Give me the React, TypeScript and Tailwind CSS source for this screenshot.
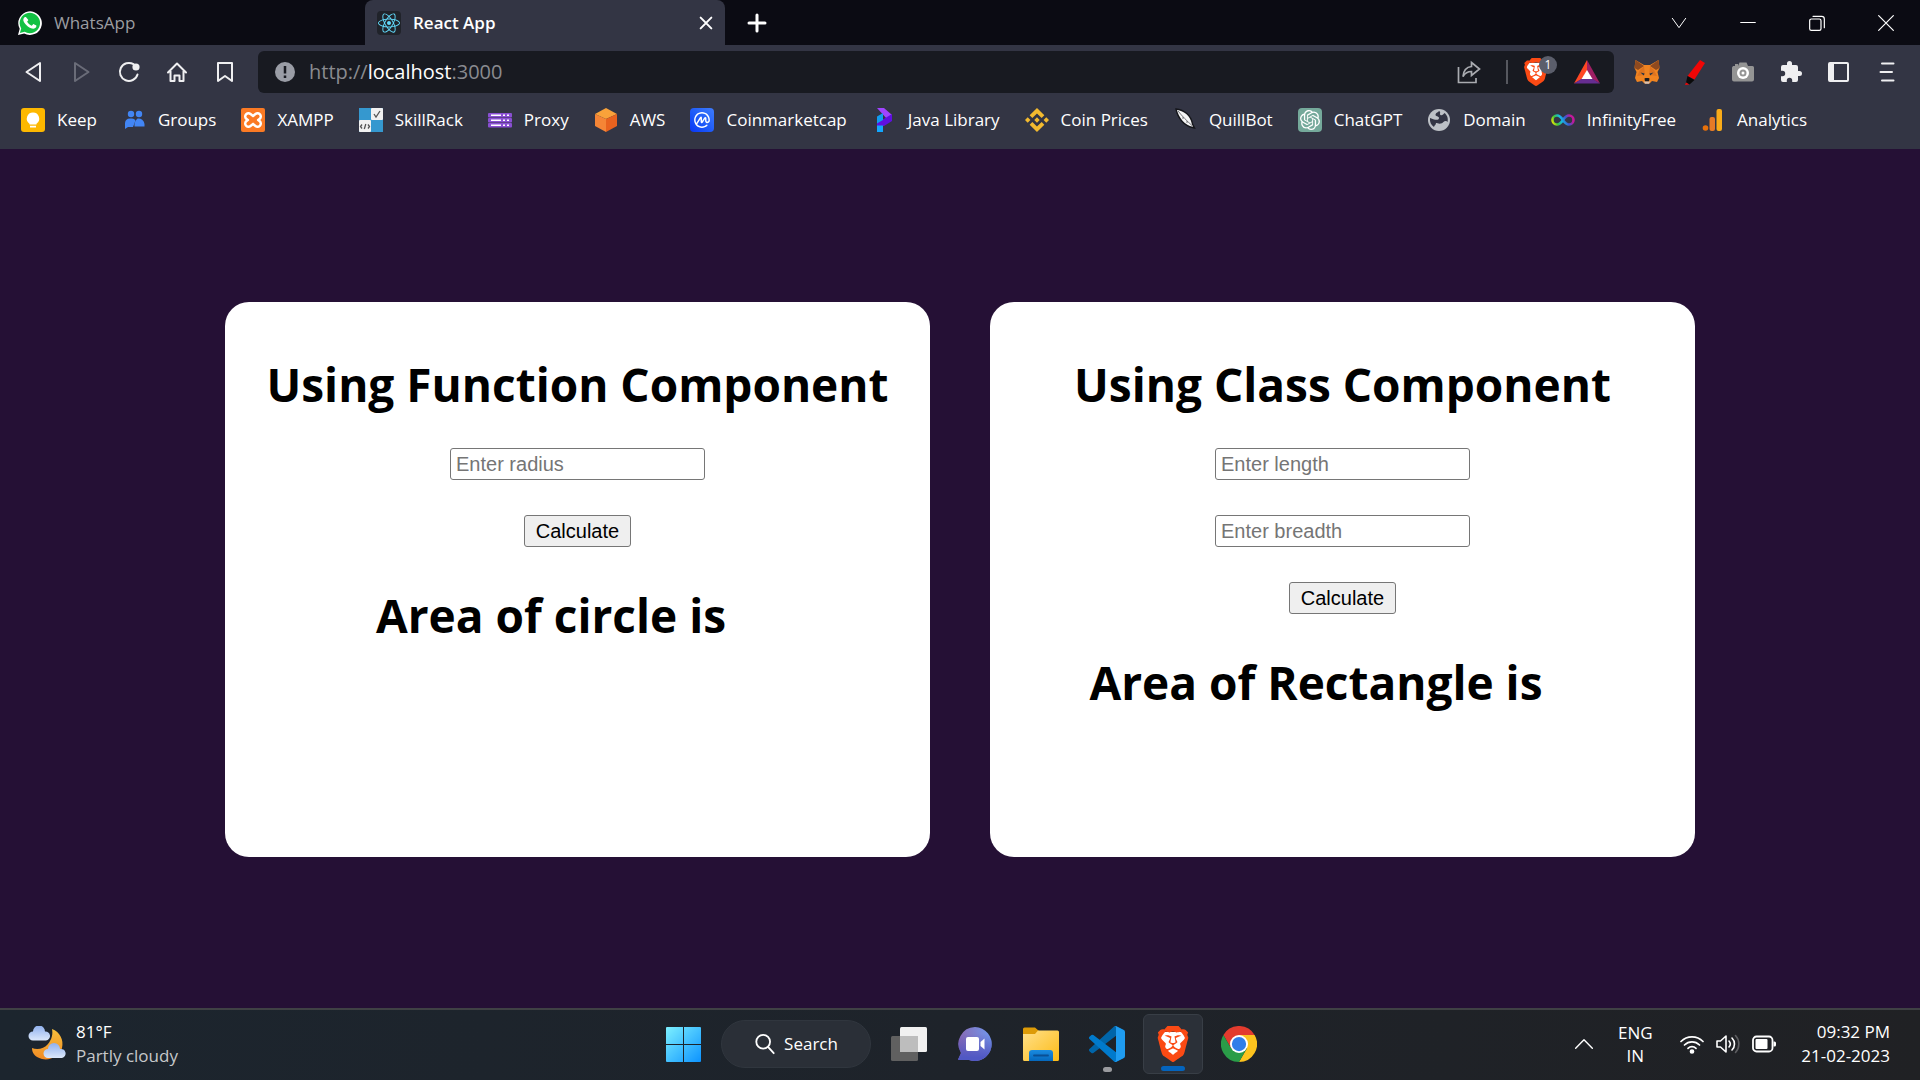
import type { ReactNode } from "react";
import { FaReact } from "react-icons/fa";
import { SiBinance, SiBrave, SiCoinmarketcap, SiOpenai } from "react-icons/si";

/* ---------- Tab strip and toolbar icons ---------- */

const WhatsAppIcon = () => (
  <svg viewBox="0 0 24 24" className="size-6 shrink-0">
    <path d="M0 24 1.7 17.8A11.8 11.8 0 1 1 6.2 22.400Z" fill="#fff" />
    <path d="M1.900 22.100 3.200 17.400A10.200 10.200 0 1 1 6.700 20.800Z" fill="#12c143" />
    <path d="M8.300 6.400c-.3-.5-.5-.5-.9-.5-.4 0-.9.2-1.200.7-.6.7-1 1.500-.9 2.500.1 1.300 1 2.600 2 3.900 1.500 1.800 3.400 3.500 5.700 4.200 1.500.6 2.900.8 4.200-.1.8-.5 1.200-1.300 1.200-2.200 0-.3-.1-.4-.4-.6l-2.300-1.100c-.4-.2-.6-.1-.8.2l-.9 1.100c-.2.300-.5.3-.8.1-1.700-.8-3-1.900-3.900-3.500-.2-.3-.1-.5.100-.8l.7-.9c.2-.2.2-.4.1-.7Z" fill="#fff" />
  </svg>
);

const ReactTabIcon = () => (
  <span className="flex size-6 shrink-0 items-center justify-center rounded-sm bg-[#20232a]">
    <FaReact className="size-[22px] text-[#61dafb]" />
  </span>
);

const Stroke = ({ children, className = "size-6" }: { children: ReactNode; className?: string }) => (
  <svg viewBox="0 0 24 24" fill="none" stroke="currentColor" strokeWidth="2" strokeLinecap="round" strokeLinejoin="round" className={className}>
    {children}
  </svg>
);

const BackIcon = () => <Stroke><path d="M19 3v18L5.500 12Z" /></Stroke>;
const ForwardIcon = () => <Stroke><path d="M6 3v18L19.500 12Z" /></Stroke>;
const ReloadIcon = () => (
  <Stroke>
    <path d="M20.500 14.500A9 9 0 1 1 16.500 4.200" />
    <circle cx="19" cy="7" r="2.600" fill="currentColor" />
  </Stroke>
);
const HomeIcon = () => (
  <Stroke>
    <path d="M3 12.500 12 3.500 21 12.500M5.500 11V21H9.500v-5.500h5V21h4V11" />
  </Stroke>
);
const BookmarkIcon = () => <Stroke><path d="M5 3h14v18l-7-5-7 5Z" /></Stroke>;

const InfoIcon = () => (
  <svg viewBox="0 0 20 20" className="size-5 shrink-0">
    <circle cx="10" cy="10" r="10" fill="#9a9da6" />
    <path d="M10 4v7.500M10 13.500v2.500" stroke="#181a21" strokeWidth="2.500" />
  </svg>
);

const ShareIcon = () => (
  <svg viewBox="0 0 24 24" fill="none" stroke="#a9abb0" strokeWidth="1.700" className="size-6">
    <path d="M1.500 7v15.500h17.500V18M14.500 2.500 22.500 9l-8 6.500v-4c-4 0-6.500 1.500-8.500 5C6.500 10.500 9.500 7 14.500 6.500Z" />
  </svg>
);

const BraveLion = ({ className }: { className: string }) => (
  <span className={`relative inline-flex ${className}`}>
    <svg viewBox="0 0 24 24" className="absolute inset-0 size-full">
      <path d="M5 4h14l1.500 5-3 10L12 22.500 6.500 19l-3-10Z" fill="#fff" />
    </svg>
    <SiBrave className="relative size-full text-[#fb4a14]" />
  </span>
);

const BatIcon = () => (
  <svg viewBox="0 0 26 24" className="h-6 w-[26px]">
    <path d="M13 0 0 23.500l8-4.500 5-8Z" fill="#ff4724" />
    <path d="M13 0 26 23.500 18 19l-5-8Z" fill="#9e1f63" />
    <path d="M0 23.500h26L18 18.500H8Z" fill="#662d91" />
    <path d="m13 10-5.500 9h11Z" fill="#fff" />
  </svg>
);

const FoxIcon = () => (
  <svg viewBox="0 0 26 24" className="h-6 w-[26px]">
    <path d="m1.500 0 8.500 5h6l8.500-5 1 8-2 4 1.500 6-2 4-5-1-2.500 2.500h-5L8 21l-5 1-2-4 1.500-6-2-4Z" fill="#f08421" />
    <path d="m1.500 0 8.500 6-6 4-3.500-2ZM24.500 0 16 6l6 4 3.500-2Z" fill="#8f4a1f" />
    <path d="m6 10 4-3.500L11 15l-8 1ZM20 10l-4-3.500L15 15l8 1Z" fill="#dd7320" />
    <path d="m6.500 12.500 4 1-.8 2ZM19.500 12.500l-4 1 .8 2Z" fill="#233447" />
    <path d="m10.500 18.500.5 3h4l.5-3-1-.5h-3Z" fill="#1b1b1f" />
    <path d="M10 21.500h6l-1 2.200h-4Z" fill="#d7c1b3" />
  </svg>
);

const MarkerIcon = () => (
  <svg viewBox="0 0 24 30" className="h-[30px] w-6">
    <path d="m17 3 5 3L11.500 22.500l-7-3.500Z" fill="#f00606" />
    <path d="m4.500 19 7 4-5 4.500-3.500-2Z" fill="#0a0a0a" />
    <path d="m3 25.500 3.500 2-4.500.5Z" fill="#f00606" />
  </svg>
);

const CameraIcon = () => (
  <svg viewBox="0 0 24 24" className="size-6">
    <path d="M2 6h2V4h3v2l1.500-3.500h7L17 6h4.500A1.500 1.500 0 0 1 23 7.500v12a2 2 0 0 1-2 2H3a2 2 0 0 1-2-2v-12Z" fill="#949494" />
    <circle cx="12" cy="13" r="6" fill="#fff" />
    <circle cx="12" cy="13" r="3.500" fill="#949494" />
    <circle cx="12" cy="13" r="1.500" fill="#fff" />
  </svg>
);

const PuzzleIcon = () => (
  <svg viewBox="0 0 24 24" fill="currentColor" className="size-6">
    <path d="M20.500 11H19V7a2 2 0 0 0-2-2h-4V3.500a2.500 2.500 0 0 0-5 0V5H4a2 2 0 0 0-2 2v3.800h1.500a2.700 2.700 0 0 1 0 5.400H2V20a2 2 0 0 0 2 2h3.800v-1.500a2.700 2.700 0 0 1 5.400 0V22H17a2 2 0 0 0 2-2v-4h1.500a2.500 2.500 0 0 0 0-5Z" />
  </svg>
);

const SidebarIcon = () => (
  <svg viewBox="0 0 22 20" className="h-5 w-[22px]">
    <rect x="1" y="1" width="19" height="18" rx="1" fill="none" stroke="currentColor" strokeWidth="2" />
    <rect x="1" y="1" width="5" height="18" fill="currentColor" />
  </svg>
);

const MenuIcon = () => (
  <svg viewBox="0 0 16 20" className="h-5 w-4" stroke="currentColor" strokeWidth="2" strokeLinecap="round">
    <path d="M3 1.500h11.500M1.500 10h11.500M3 18.500h11.500" />
  </svg>
);

/* ---------- Bookmark icons ---------- */

const KeepIcon = () => (
  <svg viewBox="0 0 24 24" className="size-6">
    <rect width="24" height="24" rx="3" fill="#fdb800" />
    <path d="M12 4.500a6.200 6.200 0 0 0-3.500 11.300V16.500h7v-.7A6.200 6.200 0 0 0 12 4.500ZM9 17.800h6v1.700H9Z" fill="#fff" />
  </svg>
);

const GroupsIcon = () => (
  <svg viewBox="0 0 24 24" className="size-6" fill="#4285f4">
    <circle cx="9" cy="6" r="3.200" />
    <circle cx="17" cy="6" r="3.200" />
    <path d="M3 21v-6a5 5 0 0 1 5-4.500h2a4 4 0 0 1 3.500 2L11 19H6Z" />
    <path d="M12.500 18.500a9 9 0 0 1 3-8 6 6 0 0 1 7 5.500v2.500Z" />
  </svg>
);

const XamppIcon = () => (
  <svg viewBox="0 0 24 24" className="size-6" strokeLinecap="round" fill="none">
    <rect width="24" height="24" rx="2" fill="#fb7a24" />
    <path d="m7.500 8.500 9 7M16.500 8.500l-9 7" stroke="#fff" strokeWidth="9" />
    <path d="m7.500 8.500 9 7M16.500 8.500l-9 7" stroke="#fb7a24" strokeWidth="4" />
    <path d="M9 12h6" stroke="#fb7a24" strokeWidth="2" />
  </svg>
);

const SkillRackIcon = () => (
  <svg viewBox="0 0 24 24" className="size-6">
    <rect width="24" height="24" fill="#3598cf" />
    <rect x="12" width="12" height="12" rx="1" fill="#f1f1f1" />
    <rect y="12" width="12" height="12" rx="1" fill="#f1f1f1" />
    <path d="m15 6 2 3 4-6M3 16.500 1.500 18.500 3 20.500M9 16.500l1.500 2L9 20.500M6.800 16l-1.500 5" fill="none" stroke="#555" strokeWidth="1.300" />
  </svg>
);

const ProxyIcon = () => (
  <svg viewBox="0 0 24 24" className="size-6">
    {[5, 10, 15].map((y) => (
      <g key={y}>
        <rect y={y} width="24" height="4.500" rx="1" fill="#8a4fd3" />
        <path d={`M3 ${y + 2.2}h10M15 ${y + 2.2}h2M19 ${y + 2.2}h2`} stroke="#fff" strokeWidth="1.400" />
      </g>
    ))}
  </svg>
);

const AwsIcon = () => (
  <svg viewBox="0 0 24 24" className="size-6">
    <path d="M12 0 23 6 12 11 1 6Z" fill="#f9a23a" />
    <path d="M1 6 12 11v13L1 18Z" fill="#f58536" />
    <path d="M23 6 12 11v13l11-6Z" fill="#e8621f" />
  </svg>
);

const CoinmarketcapIcon = () => (
  <span className="flex size-6 items-center justify-center rounded bg-linear-to-tr from-[#0b33f5] to-[#3f7cfb]">
    <SiCoinmarketcap className="size-4 text-white" />
  </span>
);

const JavaLibraryIcon = () => (
  <svg viewBox="0 0 24 24" className="size-6">
    <path d="M5 0h7l8 7-5 4Z" fill="#a044ff" />
    <path d="M20 6v7l-8 5H5v-3Z" fill="#5f0fe0" />
    <path d="M5 8.500 11 5v7l-6 3.500Z" fill="#109cf1" />
    <path d="M5 17.500h6V24H5Z" fill="#12a6ff" />
  </svg>
);

const QuillIcon = () => (
  <svg viewBox="0 0 24 24" className="size-6">
    <path d="M3 1c8 1 15 6 16.500 15l2 4-2-.5C12 18 5 11 3 1Z" fill="#f5f5f5" stroke="#15161b" strokeWidth="1.400" />
    <path d="M5 3c4 5 9 10 14.500 15M9 10l2 0M13 14h2" stroke="#55565b" strokeWidth=".8" fill="none" />
  </svg>
);

const ChatGptIcon = () => (
  <span className="flex size-6 items-center justify-center rounded bg-[#75a99b]">
    <SiOpenai className="size-5 text-white" />
  </span>
);

const GlobeIcon = () => (
  <svg viewBox="0 0 24 24" className="size-6">
    <circle cx="12" cy="12" r="11" fill="#bdc1c6" />
    <path d="M12 3c-1 1.500-3 1.500-3.500 3.500S12 8 12 10s-2.500 2-5 1.500L3 10c-.5 4 1 7 4 9 .5-2 2-2 2-4 1 0 3 1 5 .5s3-2.500 4.500-2.500c1 0 1.500.5 2 1 1-4-.5-7-3-9-1 1-2.500 3-4 2s1-3-1.500-4Z" fill="#333544" />
  </svg>
);

const InfinityIcon = () => (
  <svg viewBox="0 0 24 24" className="size-6" fill="none">
    <defs>
      <linearGradient id="rainbow" x1="0" x2="1" y1="1" y2="0.800">
        <stop offset="0" stopColor="#f6e600" />
        <stop offset=".25" stopColor="#3cc43c" />
        <stop offset=".5" stopColor="#16b8e8" />
        <stop offset=".75" stopColor="#3b57d0" />
        <stop offset="1" stopColor="#c2189b" />
      </linearGradient>
    </defs>
    <path d="M12 12c-2-3-3.500-4.500-6-4.500a4.500 4.500 0 0 0 0 9c2.500 0 4-1.500 6-4.500s3.500-4.500 6-4.500a4.500 4.500 0 0 1 0 9c-2.500 0-4-1.500-6-4.500Z" stroke="url(#rainbow)" strokeWidth="2.600" />
  </svg>
);

const AnalyticsIcon = () => (
  <svg viewBox="0 0 24 24" className="size-6">
    <circle cx="4.500" cy="20" r="2.800" fill="#e8710a" />
    <rect x="8.500" y="9" width="5.500" height="14" rx="2" fill="#e67a26" />
    <rect x="15.500" y="1" width="5.500" height="22" rx="2" fill="#f9ab19" />
  </svg>
);

/* ---------- Taskbar icons ---------- */

const WeatherIcon = () => (
  <svg viewBox="0 0 38 36" className="h-9 w-[38px] shrink-0">
    <defs>
      <linearGradient id="moon" x1="0" x2="0" y1="0" y2="1">
        <stop offset="0" stopColor="#f7c03c" />
        <stop offset="1" stopColor="#f08a24" />
      </linearGradient>
      <linearGradient id="cloud" x1="0" x2="0" y1="0" y2="1">
        <stop offset="0" stopColor="#8fb0ee" />
        <stop offset="1" stopColor="#dce8fb" />
      </linearGradient>
    </defs>
    <path d="M24 3c8 3 12 11 10 19S22 35 14 33 4 26 4 22c5 2 12 1 16-4s5-10 4-15Z" fill="url(#moon)" />
    <path d="M5 14.500a4.500 4.500 0 0 1 0-9 6 6 0 0 1 12 0 4.500 4.500 0 0 1 1 9Z" fill="url(#cloud)" />
    <path d="M20 32a4.500 4.500 0 0 1 0-9 6 6 0 0 1 12 0 4.500 4.500 0 0 1 2 9Z" fill="url(#cloud)" />
  </svg>
);

const WindowsIcon = () => (
  <svg viewBox="0 0 35 35" className="size-[35px]">
    <defs>
      <linearGradient id="win" x1="0" y1="0" x2="1" y2="1">
        <stop offset="0" stopColor="#7df0ff" />
        <stop offset="1" stopColor="#0c93ff" />
      </linearGradient>
    </defs>
    <path d="M1 0h16v17H0V1a1 1 0 0 1 1-1ZM18 0h16a1 1 0 0 1 1 1v16H18ZM0 18h17v17H1a1 1 0 0 1-1-1ZM18 18h17v16a1 1 0 0 1-1 1H18Z" fill="url(#win)" />
  </svg>
);

const TaskViewIcon = () => (
  <svg viewBox="0 0 36 34" className="h-[34px] w-9">
    <rect y="9" width="27" height="25" rx="1.500" fill="#606060" />
    <rect x="9" width="27" height="25" rx="1.500" fill="#f1f1f1" />
    <rect x="9" y="9" width="18" height="16" fill="#bdbdbd" />
  </svg>
);

const ChatIcon = () => (
  <svg viewBox="0 0 34 34" className="size-[34px]">
    <defs>
      <linearGradient id="chat" x1="0" y1="0.300" x2="1" y2="0">
        <stop offset="0" stopColor="#8a67b0" />
        <stop offset="1" stopColor="#6f9af0" />
      </linearGradient>
      <linearGradient id="chatShade" x1="0" y1="0" x2="0" y2="1">
        <stop offset=".2" stopColor="#5058c4" stopOpacity="0" />
        <stop offset=".9" stopColor="#5058c4" />
      </linearGradient>
    </defs>
    {["url(#chat)", "url(#chatShade)"].map((fill) => (
      <path key={fill} d="M17 0a17 17 0 1 1-6 33H1c-1 0-1-.8-.5-1.500L3 26A17 17 0 0 1 17 0Z" fill={fill} />
    ))}
    <rect x="8" y="10" width="13" height="14" rx="2" fill="#fff" />
    <path d="m22.500 15 4-3.500v11l-4-3.500Z" fill="#fff" />
  </svg>
);

const FolderIcon = () => (
  <svg viewBox="0 0 36 34" className="h-[34px] w-9">
    <defs>
      <linearGradient id="folder" x1="0" y1="0" x2="1" y2="1">
        <stop offset="0" stopColor="#ffe08a" />
        <stop offset="1" stopColor="#fdbb16" />
      </linearGradient>
      <linearGradient id="drawer" x1="0" y1="0" x2="0" y2="1">
        <stop offset="0" stopColor="#1a8be0" />
        <stop offset="1" stopColor="#0568bd" />
      </linearGradient>
    </defs>
    <path d="M0 2a1.500 1.500 0 0 1 1.500-1.500H12L16 4v4H0Z" fill="#dd9b07" />
    <path d="M0 7h12l3-3.500h19.500A1.500 1.500 0 0 1 36 5v27.500A1.500 1.500 0 0 1 34.500 34h-33A1.500 1.500 0 0 1 0 32.500Z" fill="url(#folder)" />
    <path d="M6 34v-8a3 3 0 0 1 3-3h18a3 3 0 0 1 3 3v8Z" fill="url(#drawer)" />
    <path d="M11 28.500h14" stroke="#0a4f94" strokeWidth="1.800" strokeLinecap="round" />
  </svg>
);

const VsCodeIcon = () => (
  <svg viewBox="0 0 100 100" className="size-9">
    <path d="m96.500 10.800-20.600-9.900a6.200 6.200 0 0 0-7.100 1.200L1.300 63.600a4.200 4.200 0 0 0 0 6.200l5.500 5a4.200 4.200 0 0 0 5.300.2L93.400 13.400c2.700-2 6.600-.1 6.600 3.300v-.2a6.300 6.300 0 0 0-3.500-5.700Z" fill="#0065a9" />
    <path d="m96.500 89.200-20.600 9.900a6.200 6.200 0 0 1-7.100-1.200L1.300 36.400a4.200 4.200 0 0 1 0-6.200l5.500-5a4.200 4.200 0 0 1 5.300-.2l81.300 61.600c2.700 2 6.600.1 6.600-3.300v.2a6.300 6.300 0 0 1-3.500 5.700Z" fill="#007acc" />
    <path d="M75.900 99.100a6.200 6.200 0 0 1-7.100-1.200c2.300 2.300 6.200.7 6.200-2.600V4.700c0-3.300-3.900-4.900-6.200-2.600A6.200 6.200 0 0 1 75.900.9l20.600 9.900a6.300 6.300 0 0 1 3.500 5.700v67a6.300 6.300 0 0 1-3.500 5.700Z" fill="#1f9cf0" />
  </svg>
);

const ChromeIcon = () => (
  <svg viewBox="0 0 48 48" className="size-9">
    <path d="M24 12h20.800A24 24 0 0 0 3.200 12l10.400 18Z" fill="#e33b2e" />
    <path d="M34.400 30 24 48a24 24 0 0 0 20.800-36H24Z" fill="#fcc31e" />
    <path d="M13.600 30 3.200 12A24 24 0 0 0 24 48l10.400-18Z" fill="#2a9c48" />
    <circle cx="24" cy="24" r="12" fill="#fff" />
    <circle cx="24" cy="24" r="9.500" fill="#2f7de9" />
  </svg>
);

const WifiIcon = () => (
  <svg viewBox="0 0 24 20" fill="none" stroke="#fff" strokeWidth="1.700" strokeLinecap="round" className="h-5 w-6">
    <path d="M1 7.500a15.500 15.500 0 0 1 22 0M4.500 11a10.500 10.500 0 0 1 15 0M8 14.300a5.800 5.800 0 0 1 8 0" />
    <circle cx="12" cy="17.500" r="1.500" fill="#fff" />
  </svg>
);

const SpeakerIcon = () => (
  <svg viewBox="0 0 24 20" fill="none" stroke="#fff" strokeWidth="1.600" strokeLinecap="round" strokeLinejoin="round" className="h-5 w-6">
    <path d="M1 7h3.500L10 2v16l-5.500-5H1ZM13 7a4.500 4.500 0 0 1 0 6M16 4a8.500 8.500 0 0 1 0 12" />
    <path d="M19.500 1.500a12.500 12.500 0 0 1 0 17" stroke="#5c5d60" />
  </svg>
);

const BatteryIcon = () => (
  <svg viewBox="0 0 24 18" className="h-[18px] w-6">
    <rect x="1" y="1.500" width="19.500" height="15" rx="3.500" fill="none" stroke="#fff" strokeWidth="1.800" />
    <rect x="3.500" y="4" width="12" height="10" rx="1" fill="#fff" />
    <path d="M21.500 6.500h1a1.500 1.500 0 0 1 1.500 1.500v2a1.500 1.500 0 0 1-1.500 1.500h-1Z" fill="#fff" />
  </svg>
);

/* ---------- Data ---------- */

const bookmarks: { label: string; icon: ReactNode }[] = [
  { label: "Keep", icon: <KeepIcon /> },
  { label: "Groups", icon: <GroupsIcon /> },
  { label: "XAMPP", icon: <XamppIcon /> },
  { label: "SkillRack", icon: <SkillRackIcon /> },
  { label: "Proxy", icon: <ProxyIcon /> },
  { label: "AWS", icon: <AwsIcon /> },
  { label: "Coinmarketcap", icon: <CoinmarketcapIcon /> },
  { label: "Java Library", icon: <JavaLibraryIcon /> },
  { label: "Coin Prices", icon: <SiBinance className="size-6 text-[#f3ba2f]" /> },
  { label: "QuillBot", icon: <QuillIcon /> },
  { label: "ChatGPT", icon: <ChatGptIcon /> },
  { label: "Domain", icon: <GlobeIcon /> },
  { label: "InfinityFree", icon: <InfinityIcon /> },
  { label: "Analytics", icon: <AnalyticsIcon /> },
];

/* ---------- Browser chrome ---------- */

const IconButton = ({ label, className = "w-12", children }: { label: string; className?: string; children: ReactNode }) => (
  <button type="button" aria-label={label} className={`flex h-10 shrink-0 items-center justify-center ${className}`}>
    {children}
  </button>
);

const TabStrip = () => (
  <div className="flex h-[45px] items-stretch bg-[#0b0b13]">
    <div className="flex w-[365px] items-center gap-3 pl-[18px] text-[#9c9da1]">
      <WhatsAppIcon />
      <span>WhatsApp</span>
    </div>
    <div className="flex w-[360px] items-center gap-3 rounded-t-lg bg-[#333544] pl-3 font-semibold text-white">
      <ReactTabIcon />
      <span className="flex-1">React App</span>
      <IconButton label="Close tab" className="w-[38px]">
        <Stroke className="size-4"><path d="M4 4 20 20M20 4 4 20" strokeWidth="3" /></Stroke>
      </IconButton>
    </div>
    <div className="flex flex-1 items-center text-white">
      <IconButton label="New tab" className="w-16">
        <Stroke><path d="M12 4v16M4 12h16" strokeWidth="3" /></Stroke>
      </IconButton>
      <div className="ml-auto flex items-center">
        <IconButton label="Search tabs" className="w-[69px]">
          <Stroke className="size-4"><path d="m2 5 10 14L22 5" strokeWidth="1.500" /></Stroke>
        </IconButton>
        <IconButton label="Minimize" className="w-[69px]">
          <Stroke className="size-4"><path d="M1 11.250h22" strokeWidth="1.500" /></Stroke>
        </IconButton>
        <IconButton label="Restore" className="w-[69px]">
          <Stroke className="size-4"><path d="M1 8.500A2.500 2.500 0 0 1 3.500 6h12A2.500 2.500 0 0 1 18 8.500v12a2.500 2.500 0 0 1-2.500 2.500h-12A2.500 2.500 0 0 1 1 20.500ZM6 2h13a4 4 0 0 1 4 4v13" strokeWidth="1.800" /></Stroke>
        </IconButton>
        <IconButton label="Close" className="w-[69px]">
          <Stroke className="size-4"><path d="M1 1 23 23M23 1 1 23" strokeWidth="1.800" /></Stroke>
        </IconButton>
      </div>
    </div>
  </div>
);

const Toolbar = () => (
  <div className="flex items-center pt-1.5 pr-[9px] pl-[9px] text-[#efeff1]">
    <IconButton label="Back"><BackIcon /></IconButton>
    <IconButton label="Forward" className="w-12 text-[#6a6c78]"><ForwardIcon /></IconButton>
    <IconButton label="Reload"><ReloadIcon /></IconButton>
    <IconButton label="Home"><HomeIcon /></IconButton>
    <IconButton label="Bookmark this page"><BookmarkIcon /></IconButton>
    <div className="mr-[9px] ml-[9px] flex h-[42px] flex-1 items-center rounded-md bg-[#181a21] pl-[17px] text-xl">
      <InfoIcon />
      <p className="flex-1 pl-3.5 text-[#8a8b90]">
        http://<span className="text-white">localhost</span>:3000
      </p>
      <IconButton label="Share"><ShareIcon /></IconButton>
      <span className="mr-2.5 ml-[13px] h-6 w-0.5 bg-[#56585f]" />
      <IconButton label="Brave Shields, 1 blocked" className="relative w-9">
        <BraveLion className="size-7" />
        <span className="absolute top-1 -right-[3px] flex h-[18px] w-[18px] items-center justify-center rounded-full bg-[#5b5e6b] text-xs text-white">
          1
        </span>
      </IconButton>
      <IconButton label="Brave Rewards" className="ml-1.5 w-[54px]"><BatIcon /></IconButton>
    </div>
    <IconButton label="MetaMask"><FoxIcon /></IconButton>
    <IconButton label="Marker"><MarkerIcon /></IconButton>
    <IconButton label="Screenshot"><CameraIcon /></IconButton>
    <IconButton label="Extensions"><PuzzleIcon /></IconButton>
    <IconButton label="Sidebar"><SidebarIcon /></IconButton>
    <IconButton label="Menu"><MenuIcon /></IconButton>
  </div>
);

const BookmarksBar = () => (
  <nav aria-label="Bookmarks" className="flex h-14 items-center gap-[25px] pb-0.5 pl-[21px] text-white">
    {bookmarks.map(({ label, icon }) => (
      <a key={label} href="#" className="flex items-center gap-3 whitespace-nowrap">
        {icon}
        {label}
      </a>
    ))}
  </nav>
);

/* ---------- Page ---------- */

const Card = ({ title, fields, result }: { title: string; fields: string[]; result: string }) => (
  <section className="flex min-h-[555px] w-full max-w-[705px] flex-col items-center rounded-3xl bg-white pt-[50px] text-black">
    <h1 className="mb-8 text-[46px] leading-16 font-bold whitespace-nowrap">{title}</h1>
    <form className="flex flex-col items-center gap-[35px] font-['Liberation_Sans',sans-serif] text-xl leading-6">
      {fields.map((field) => (
        <input
          key={field}
          type="text"
          aria-label={field}
          placeholder={field}
          className="h-8 w-[255px] rounded-[3px] border border-[#767676] bg-white px-[5px] placeholder:text-[#757575]"
        />
      ))}
      <button type="button" className="h-8 w-[107px] rounded-[3px] border border-[#767676] bg-[#efefef]">
        Calculate
      </button>
    </form>
    <h1 className="mt-9 flex text-[46px] leading-16 font-bold whitespace-nowrap">
      {result}
      <output className="w-[53px]" />
    </h1>
  </section>
);

/* ---------- Taskbar ---------- */

const TaskButton = ({ label, children, className = "w-[60px]" }: { label: string; children: ReactNode; className?: string }) => (
  <button type="button" aria-label={label} className={`relative flex h-[60px] items-center justify-center rounded-md ${className}`}>
    {children}
  </button>
);

const Taskbar = () => (
  <footer className="grid h-[72px] grid-cols-[1fr_auto_1fr] items-center border-t-2 border-[#3f4144] bg-linear-to-r from-[#1c252e] via-[#1e232a] to-[#202124] pb-0.5 text-white">
    <div className="flex items-center gap-2.5 pl-7">
      <WeatherIcon />
      <div className="leading-6">
        <p>81°F</p>
        <p className="text-[#c6c8ca]">Partly cloudy</p>
      </div>
    </div>

    <div className="flex items-center gap-1.5 pl-0.5">
      <TaskButton label="Start"><WindowsIcon /></TaskButton>
      <button type="button" className="mx-0.5 flex h-12 w-[150px] items-center justify-center gap-2 rounded-full border border-[#30363e] bg-[#2a2f37]">
        <Stroke className="size-[22px]"><circle cx="10" cy="9.500" r="7.500" /><path d="m15.500 15.500 6 6.500" /></Stroke>
        Search
      </button>
      <TaskButton label="Task view"><TaskViewIcon /></TaskButton>
      <TaskButton label="Chat"><ChatIcon /></TaskButton>
      <TaskButton label="File Explorer"><FolderIcon /></TaskButton>
      <TaskButton label="Visual Studio Code">
        <VsCodeIcon />
        <span className="absolute bottom-0.5 h-[5px] w-[9px] rounded-full bg-[#9a9b9f]" />
      </TaskButton>
      <TaskButton label="Brave" className="w-[60px] border border-[#383e46] bg-[#2b3038]">
        <BraveLion className="size-9" />
        <span className="absolute bottom-0.5 h-[5px] w-6 rounded-full bg-[#0464bd]" />
      </TaskButton>
      <TaskButton label="Google Chrome"><ChromeIcon /></TaskButton>
    </div>

    <div className="flex items-center justify-end pr-[30px]">
      <TaskButton label="Hidden icons" className="w-9">
        <Stroke className="size-5"><path d="m2 17 10-10 10 10" strokeWidth="1.700" /></Stroke>
      </TaskButton>
      <div className="ml-2.5 w-[46px] text-center leading-[23px]">
        <p>ENG</p>
        <p>IN</p>
      </div>
      <div className="ml-[22px] flex items-center gap-3">
        <WifiIcon />
        <SpeakerIcon />
        <BatteryIcon />
      </div>
      <div className="ml-[25px] text-right leading-6">
        <p>09:32 PM</p>
        <p>21-02-2023</p>
      </div>
    </div>
  </footer>
);

export default function App() {
  return (
    <div className="flex min-h-screen flex-col bg-[#251035] font-['Open_Sans',sans-serif] text-[17px]">
      <header className="bg-[#333544]">
        <TabStrip />
        <Toolbar />
        <BookmarksBar />
      </header>
      <main className="flex flex-1 items-center justify-center gap-[60px] px-6 pt-0.5">
        <Card title="Using Function Component" fields={["Enter radius"]} result="Area of circle is" />
        <Card title="Using Class Component" fields={["Enter length", "Enter breadth"]} result="Area of Rectangle is" />
      </main>
      <Taskbar />
    </div>
  );
}
